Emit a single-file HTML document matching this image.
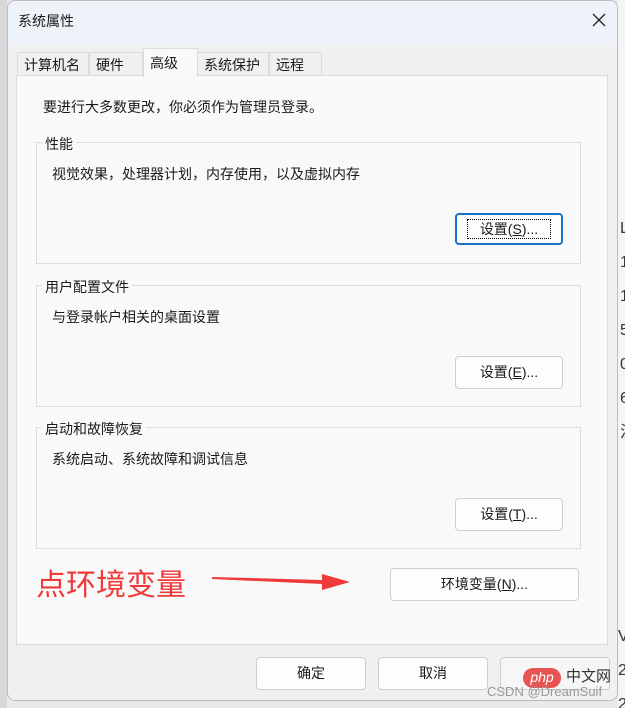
<!DOCTYPE html>
<html><head><meta charset="utf-8"><style>
html,body{margin:0;width:625px;height:708px;overflow:hidden}
body{background:#e9e9e9;font-family:"Liberation Sans","Noto Sans CJK SC",sans-serif;font-size:14px;color:#1a1a1a;position:relative}
.a{position:absolute}
.dlg{left:7px;top:0;width:611px;height:701px;background:#f0f0f0;border:1px solid #bcbcbc;border-radius:8px;box-sizing:border-box;overflow:hidden}
.tb{left:0;top:0;width:100%;height:44px;background:#eef2f9}
.panel{left:16px;top:75px;width:592px;height:570px;background:#f9f9f9;border:1px solid #dcdcdc;box-sizing:border-box}
.tab{top:52px;height:24px;border:1px solid #dcdcdc;border-bottom:none;background:#f0f0f0;box-sizing:border-box;padding:2px 0 0 6px;font-size:14px}
.grp{left:36px;width:545px;height:122px;border:1px solid #dcdcdc;box-sizing:border-box}
.gl{background:#f9f9f9;padding:0 3px;font-size:14px}
.btn{background:#fdfdfd;border:1px solid #cfcfcf;border-radius:4px;box-sizing:border-box;text-align:center;font-size:14px}
</style></head><body>
<div class="a" style="left:0;top:0;width:7px;height:708px;background:#d8d8d8"></div>
<div class="a" style="left:618px;top:0;width:7px;height:708px;background:#f4f4f4"></div>
<div class="a" style="left:620px;top:212px;font-size:16px;color:#333;line-height:34px">L<br>1<br>1<br>5<br>0<br>6<br>注</div>
<div class="a" style="left:618px;top:620px;font-size:16px;color:#333;line-height:34px">V<br>2<br>2</div>
<div class="a dlg">
 <div class="a tb"></div>
 <div class="a" style="left:10px;top:10px;font-size:14px">系统属性</div>
 <svg class="a" style="left:584px;top:12px" width="14" height="14"><path d="M1 1L13 13M13 1L1 13" stroke="#222" stroke-width="1.3"/></svg>
</div>
<div class="a tab" style="left:17px;width:72px">计算机名</div>
<div class="a tab" style="left:89px;width:54px">硬件</div>
<div class="a tab" style="left:197px;width:72px">系统保护</div>
<div class="a tab" style="left:269px;width:53px">远程</div>
<div class="a panel"></div>
<div class="a tab" style="left:143px;width:55px;top:48px;height:29px;background:#f9f9f9;padding-top:4px">高级</div>
<div class="a" style="left:43px;top:97px">要进行大多数更改，你必须作为管理员登录。</div>

<div class="a grp" style="top:142px"></div>
<div class="a gl" style="left:42px;top:134px">性能</div>
<div class="a" style="left:52px;top:164px">视觉效果，处理器计划，内存使用，以及虚拟内存</div>
<div class="a btn" style="left:455px;top:213px;width:108px;height:32px;border:2px solid #1a73c9;line-height:28px"><span style="border:1px dotted #000;padding:1px 12px">设置(<u>S</u>)...</span></div>

<div class="a grp" style="top:285px"></div>
<div class="a gl" style="left:42px;top:277px">用户配置文件</div>
<div class="a" style="left:52px;top:307px">与登录帐户相关的桌面设置</div>
<div class="a btn" style="left:455px;top:356px;width:108px;height:33px;line-height:31px">设置(<u>E</u>)...</div>

<div class="a grp" style="top:427px"></div>
<div class="a gl" style="left:42px;top:419px">启动和故障恢复</div>
<div class="a" style="left:52px;top:449px">系统启动、系统故障和调试信息</div>
<div class="a btn" style="left:455px;top:498px;width:108px;height:33px;line-height:31px">设置(<u>T</u>)...</div>

<div class="a" style="left:36px;top:566px;font-size:30px;color:#f03a3a;line-height:40px">点环境变量</div>
<svg class="a" style="left:210px;top:570px" width="145" height="26"><polygon points="2,7 112,10 112,4 140,12 112,20 112,14 2,9" fill="#f03a3a"/></svg>
<div class="a btn" style="left:390px;top:568px;width:189px;height:33px;line-height:31px">环境变量(<u>N</u>)...</div>

<div class="a btn" style="left:256px;top:657px;width:110px;height:33px;line-height:31px">确定</div>
<div class="a btn" style="left:378px;top:657px;width:110px;height:33px;line-height:31px">取消</div>
<div class="a btn" style="left:500px;top:657px;width:110px;height:33px;line-height:31px;background:#f6f6f6;color:#aaa"></div>
<div class="a" style="left:523px;top:668px;width:38px;height:20px;border-radius:10px;background:#e85454;color:#fff;font-size:14px;text-align:center;line-height:18px;font-style:italic">php</div>
<div class="a" style="left:566px;top:665px;font-size:15px;color:#333">中文网</div>
<div class="a" style="left:487px;top:684px;font-size:13px;color:#999">CSDN @DreamSuif</div>
</body></html>
